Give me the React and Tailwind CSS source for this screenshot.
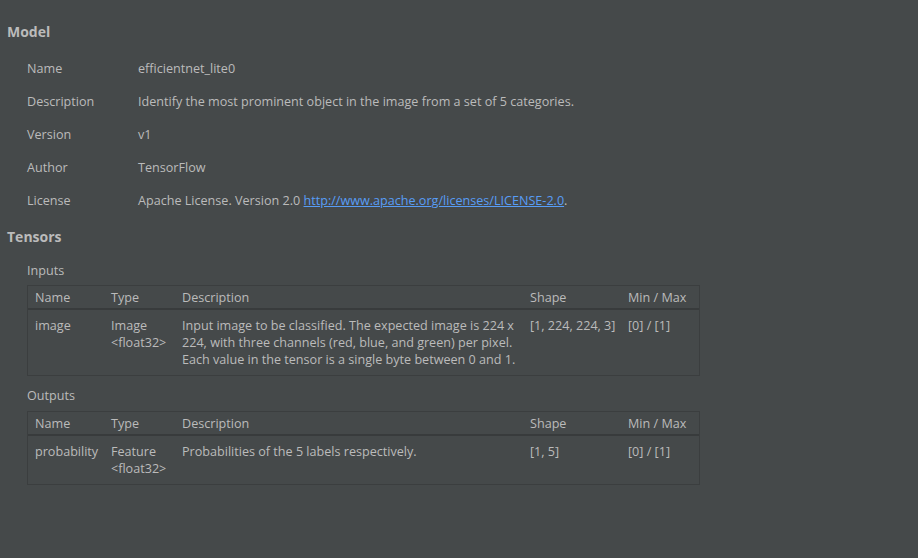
import React from "react";

const rows = [
  ["Name", "efficientnet_lite0"],
  ["Description", "Identify the most prominent object in the image from a set of 5 categories."],
  ["Version", "v1"],
  ["Author", "TensorFlow"],
];

function Table({ row }) {
  const cols = "grid grid-cols-[76px_71px_348px_98px_1fr]";
  return (
    <div className="w-[673px] border border-[#3b3e3f]">
      <div className={`${cols} h-[24px] items-center border-b-2 border-[#383b3c]`}>
        <div className="pl-[7px]">Name</div>
        <div className="pl-[7px]">Type</div>
        <div className="pl-[7px]">Description</div>
        <div className="pl-[7px]">Shape</div>
        <div className="pl-[7px]">Min / Max</div>
      </div>
      <div className={`${cols} pt-[7px] pb-[7px]`}>
        <div className="pl-[7px]">{row[0]}</div>
        <div className="pl-[7px]">{row[1]}<br />&lt;float32&gt;</div>
        <div className="pl-[7px] pr-1">{row[2]}</div>
        <div className="pl-[7px]">{row[3]}</div>
        <div className="pl-[7px]">{row[4]}</div>
      </div>
    </div>
  );
}

export default function App() {
  return (
    <div
      className="min-h-[558px] w-full bg-[#45494a] text-[#bbbbbb] text-[12.6px] leading-[17px] pl-[7px]"
      style={{ fontFamily: '"Open Sans", "Noto Sans", sans-serif' }}
    >
      <div className="pt-[23px] text-[14px] leading-[18px] font-bold">Model</div>
      <div className="mt-[11px] pl-[20px]">
        {rows.map(([k, v]) => (
          <div key={k} className="flex py-2">
            <div className="w-[111px]">{k}</div>
            <div>{v}</div>
          </div>
        ))}
        <div className="flex py-2">
          <div className="w-[111px]">License</div>
          <div>
            Apache License. Version 2.0{" "}
            <span className="text-[#589df6] underline">http://www.apache.org/licenses/LICENSE-2.0</span>.
          </div>
        </div>
      </div>
      <div className="mt-[11px] text-[14px] leading-[18px] font-bold">Tensors</div>
      <div className="pl-[20px]">
        <div className="mt-[16px]">Inputs</div>
        <div className="mt-[6px]">
          <Table
            row={[
              "image",
              "Image",
              "Input image to be classified. The expected image is 224 x 224, with three channels (red, blue, and green) per pixel. Each value in the tensor is a single byte between 0 and 1.",
              "[1, 224, 224, 3]",
              "[0] / [1]",
            ]}
          />
        </div>
        <div className="mt-[11px]">Outputs</div>
        <div className="mt-[7px]">
          <Table
            row={[
              "probability",
              "Feature",
              "Probabilities of the 5 labels respectively.",
              "[1, 5]",
              "[0] / [1]",
            ]}
          />
        </div>
      </div>
    </div>
  );
}
